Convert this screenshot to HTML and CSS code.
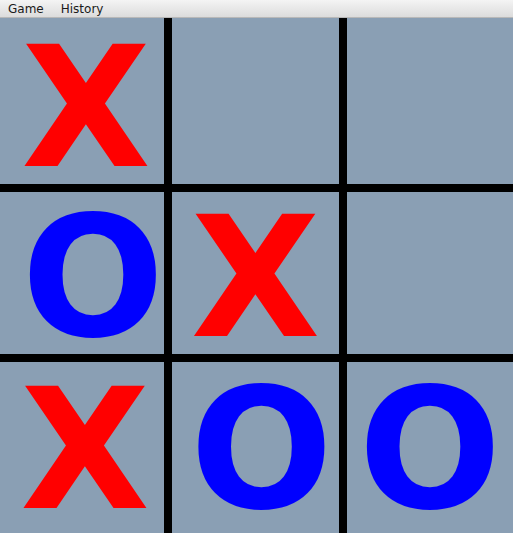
FILE: index.html
```html
<!DOCTYPE html>
<html>
<head>
<meta charset="utf-8">
<link rel="stylesheet" href="styles.css">
</head>
<body>
<div class="menubar">
  <span class="menu menu-game">Game</span>
  <span class="menu menu-history">History</span>
</div>
<div class="board">
  <div class="cell r0"><span class="mark x x-a">X</span></div>
  <div class="cell r0"></div>
  <div class="cell r0"></div>
  <div class="cell r1"><span class="mark o o-a">O</span></div>
  <div class="cell r1"><span class="mark x x-b">X</span></div>
  <div class="cell r1"></div>
  <div class="cell r2"><span class="mark x x-c">X</span></div>
  <div class="cell r2"><span class="mark o o-b">O</span></div>
  <div class="cell r2"><span class="mark o o-c">O</span></div>
</div>
</body>
</html>
```

FILE: styles.css
```css
html, body {
  margin: 0;
  padding: 0;
  width: 513px;
  height: 533px;
  overflow: hidden;
  background: #000;
}

.menubar {
  height: 17px;
  border-bottom: 1px solid #b8b8b8;
  background: linear-gradient(#f4f4f4, #dcdcdc);
  display: flex;
  align-items: center;
  font-family: "DejaVu Sans", sans-serif;
  font-size: 12px;
  line-height: 14px;
  color: #1a1a1a;
}

.menu-game {
  margin-left: 8px;
}

.menu-history {
  margin-left: 17px;
}

.board {
  display: grid;
  grid-template-columns: 164px 167px 166px;
  grid-template-rows: 166px 162px 171px;
  gap: 8px;
  height: 515px;
  background: #000;
}

.cell {
  background: #8a9fb4;
  display: flex;
  align-items: center;
  justify-content: center;
}

.mark {
  font-family: "DejaVu Sans", sans-serif;
  font-weight: bold;
  font-size: 168px;
  line-height: 0.7;
}

.r0 .mark { margin-top: 16px; }
.r1 .mark { margin-top: 12px; }
.r2 .mark { margin-top: 6px; }

.x-a { margin-left: 8px; }
.o-a { margin-left: 22px; }
.x-b { margin-left: 0; }
.x-c { margin-left: 6px; }
.o-b { margin-left: 12px; }
.o-c { margin-left: 0; }

.x {
  color: #ff0000;
}

.o {
  color: #0000ff;
}
```
